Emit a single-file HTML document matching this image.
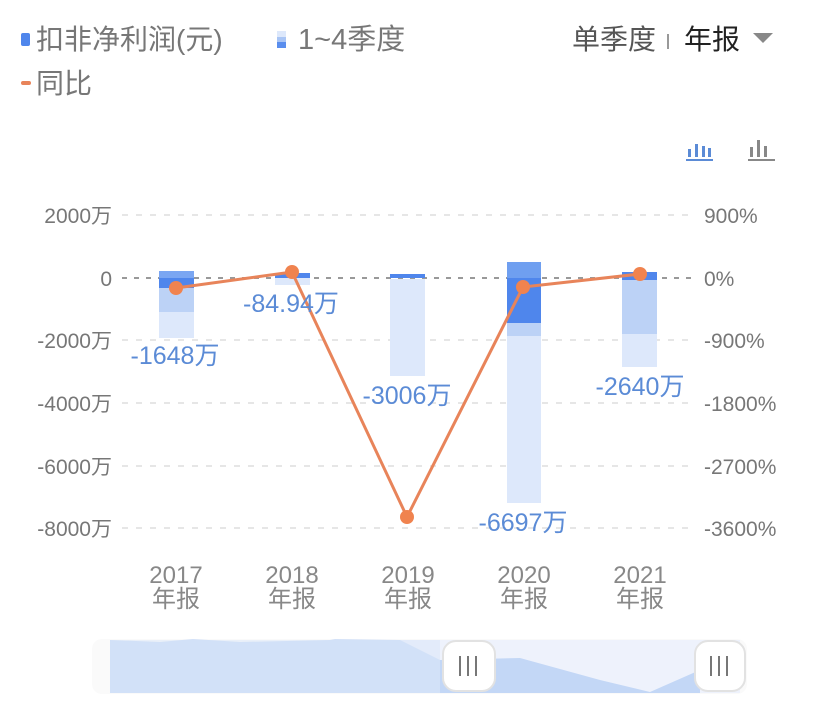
<!DOCTYPE html>
<html><head><meta charset="utf-8"><style>
html,body{margin:0;padding:0;background:#fff;width:814px;height:727px;overflow:hidden}
svg text{font-family:"Liberation Sans","Noto Sans CJK SC",sans-serif}
</style></head><body>
<svg width="814" height="727" viewBox="0 0 814 727" xmlns="http://www.w3.org/2000/svg">
<rect x="21" y="33" width="9" height="13" rx="2" fill="#4f86ec"/>
<text x="36" y="49" font-size="28" fill="#777">扣非净利润(元)</text>
<rect x="277" y="31" width="9" height="6" fill="#dde8fb"/>
<rect x="277" y="37" width="9" height="5" fill="#a9c5f5"/>
<rect x="277" y="42" width="9" height="6" fill="#5a8eee"/>
<text x="298" y="49" font-size="29" fill="#777">1~4季度</text>
<rect x="21" y="81" width="10" height="4" rx="2" fill="#e8845a"/>
<text x="36" y="93" font-size="28" fill="#777">同比</text>
<text x="572" y="49" font-size="28" fill="#555">单季度</text>
<rect x="667" y="34" width="2" height="15" fill="#999"/>
<text x="684" y="49" font-size="28" fill="#222">年报</text>
<path d="M753 33 L773 33 L763 43 Z" fill="#888"/>
<g fill="#5b8bd6"><rect x="688" y="149" width="3" height="8"/><rect x="695" y="144" width="3" height="13"/><rect x="702" y="146" width="3" height="11"/><rect x="708" y="148" width="3" height="9"/><rect x="686" y="159" width="27" height="2"/></g>
<g fill="#888"><rect x="750" y="147" width="3" height="10"/><rect x="757" y="140" width="3" height="17"/><rect x="764" y="146" width="3" height="11"/><rect x="748" y="159" width="27" height="2"/></g>
<g stroke="#e6e6e6" stroke-width="2" stroke-dasharray="6,8">
<line x1="122" y1="215" x2="695" y2="215"/><line x1="122" y1="340" x2="695" y2="340"/>
<line x1="122" y1="403" x2="695" y2="403"/><line x1="122" y1="466" x2="695" y2="466"/>
<line x1="122" y1="528" x2="695" y2="528"/></g>
<line x1="122" y1="278" x2="695" y2="278" stroke="#999" stroke-width="2" stroke-dasharray="5,7"/>
<g font-size="21" fill="#777" text-anchor="end">
<text x="112" y="223">2000万</text><text x="112" y="286">0</text><text x="112" y="348">-2000万</text>
<text x="112" y="411">-4000万</text><text x="112" y="474">-6000万</text><text x="112" y="536">-8000万</text></g>
<g font-size="21" fill="#777">
<text x="704" y="223">900%</text><text x="704" y="286">0%</text><text x="704" y="348">-900%</text>
<text x="704" y="411">-1800%</text><text x="704" y="474">-2700%</text><text x="704" y="536">-3600%</text></g>
<rect x="159" y="271" width="35" height="7" fill="#7aa6f2"/>
<rect x="159" y="278" width="35" height="10" fill="#4f86ec"/>
<rect x="159" y="288" width="35" height="24" fill="#bcd2f6"/>
<rect x="159" y="312" width="35" height="26" fill="#dde8fb"/>
<rect x="275" y="273" width="35" height="5" fill="#4f86ec"/>
<rect x="275" y="278" width="35" height="7" fill="#dde8fb"/>
<rect x="390" y="274" width="35" height="4" fill="#4f86ec"/>
<rect x="390" y="279" width="35" height="97" fill="#dde8fb"/>
<rect x="507" y="262" width="34" height="16" fill="#6f9ff0"/>
<rect x="507" y="278" width="34" height="45" fill="#4f86ec"/>
<rect x="507" y="323" width="34" height="13" fill="#bcd2f6"/>
<rect x="507" y="336" width="34" height="167" fill="#dde8fb"/>
<rect x="622" y="272" width="35" height="8" fill="#4f86ec"/>
<rect x="622" y="280" width="35" height="54" fill="#bcd2f6"/>
<rect x="622" y="334" width="35" height="33" fill="#dde8fb"/>
<polyline points="176,288 292,272 407,517 523,287 640,274" fill="none" stroke="#e8845a" stroke-width="3"/>
<g fill="#f0834f"><circle cx="176" cy="288" r="7"/><circle cx="292" cy="272" r="7"/><circle cx="407" cy="517" r="7"/><circle cx="523" cy="287" r="7"/><circle cx="640" cy="274" r="7"/></g>
<g font-size="25" fill="#5b8bd6" text-anchor="middle">
<text x="175" y="364">-1648万</text><text x="291" y="312">-84.94万</text><text x="407" y="404">-3006万</text>
<text x="523" y="531">-6697万</text><text x="640" y="395">-2640万</text></g>
<g font-size="24" fill="#888" text-anchor="middle">
<text x="176" y="583">2017</text><text x="176" y="607">年报</text>
<text x="292" y="583">2018</text><text x="292" y="607">年报</text>
<text x="408" y="583">2019</text><text x="408" y="607">年报</text>
<text x="524" y="583">2020</text><text x="524" y="607">年报</text>
<text x="640" y="583">2021</text><text x="640" y="607">年报</text></g>
<rect x="92" y="639" width="655" height="55" rx="10" fill="#fafafa"/>
<rect x="400" y="640" width="340" height="53" fill="#eef2fc"/>
<path d="M110 640 L160 642 L193 639 L240 642 L330 640 L335 639 L400 640 L440 660 L440 693 L110 693 Z" fill="#d3e1f8"/>
<path d="M440 660 L520 658 L600 680 L650 692 L700 670 L700 693 L440 693 Z" fill="#c3d7f6"/>
<rect x="110" y="640" width="330" height="53" fill="#d3e1f8" opacity="0.4"/>
<rect x="443" y="641" width="52" height="50" rx="13" fill="#fff" stroke="#e2e2e2" stroke-width="2"/>
<g stroke="#777" stroke-width="2"><line x1="460" y1="656" x2="460" y2="676"/><line x1="468" y1="656" x2="468" y2="676"/><line x1="476" y1="656" x2="476" y2="676"/></g>
<rect x="695" y="641" width="50" height="50" rx="13" fill="#fff" stroke="#e2e2e2" stroke-width="2"/>
<g stroke="#777" stroke-width="2"><line x1="711" y1="656" x2="711" y2="676"/><line x1="719" y1="656" x2="719" y2="676"/><line x1="727" y1="656" x2="727" y2="676"/></g>
</svg>
</body></html>
